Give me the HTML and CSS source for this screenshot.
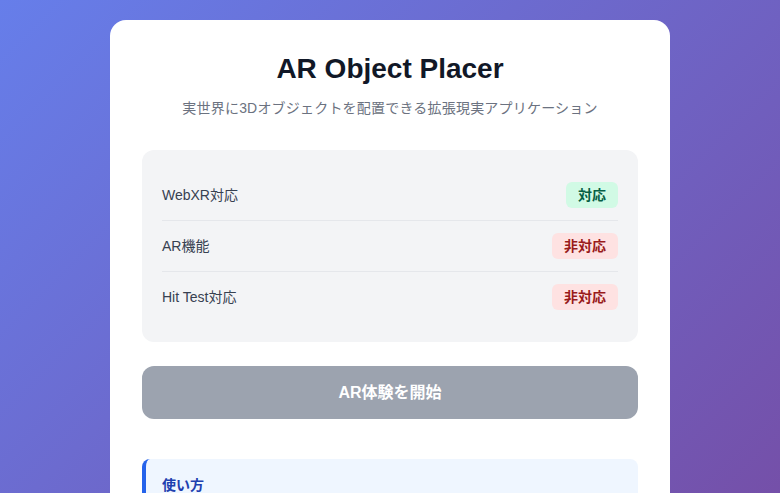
FILE: index.html
```html
<!DOCTYPE html>
<html lang="ja">
<head>
<meta charset="utf-8">
<title>AR Object Placer</title>
<link rel="stylesheet" href="styles.css">
</head>
<body>
<main class="card">
  <h1 class="title">AR Object Placer</h1>
  <p class="subtitle">実世界に3Dオブジェクトを配置できる拡張現実アプリケーション</p>
  <section class="status">
    <div class="row"><span class="label">WebXR対応</span><span class="badge ok">対応</span></div>
    <div class="row"><span class="label">AR機能</span><span class="badge ng">非対応</span></div>
    <div class="row"><span class="label">Hit Test対応</span><span class="badge ng">非対応</span></div>
  </section>
  <button class="start" disabled>AR体験を開始</button>
  <section class="info">
    <h2 class="info-title">使い方</h2>
  </section>
</main>
</body>
</html>
```
FILE: styles.css
```css
html, body {
  margin: 0;
  padding: 0;
}
body {
  min-height: 493px;
  background: linear-gradient(135deg, #667eea 0%, #764ba2 100%);
  font-family: "Liberation Sans", "Noto Sans CJK JP", sans-serif;
  display: flex;
  justify-content: center;
  padding-top: 20px;
  box-sizing: border-box;
  overflow: hidden;
}
.card {
  width: 560px;
  box-sizing: border-box;
  background: #ffffff;
  border-radius: 16px;
  padding: 32px 32px 40px;
  min-height: 600px;
}
.title {
  margin: 0;
  font-size: 28px;
  line-height: 34px;
  font-weight: 700;
  color: #111827;
  text-align: center;
}
.subtitle {
  margin: 12px 0 32px;
  font-size: 14px;
  line-height: 20px;
  letter-spacing: 0.2px;
  color: #6b7280;
  text-align: center;
}
.status {
  background: #f3f4f6;
  border-radius: 12px;
  padding: 20px;
}
.row {
  display: flex;
  justify-content: space-between;
  align-items: center;
  padding: 12px 0;
  border-bottom: 1px solid #e5e7eb;
}
.row:last-child {
  border-bottom: none;
}
.label {
  font-size: 14px;
  line-height: 20px;
  color: #374151;
}
.badge {
  font-size: 14px;
  line-height: 18px;
  font-weight: 700;
  padding: 4px 12px;
  border-radius: 6px;
}
.badge.ok {
  background: #d1fae5;
  color: #065f46;
}
.badge.ng {
  background: #fee2e2;
  color: #991b1b;
}
.start {
  display: block;
  width: 100%;
  margin-top: 24px;
  height: 53px;
  border: none;
  border-radius: 12px;
  background: #9ca3af;
  color: #ffffff;
  font-family: inherit;
  font-size: 16px;
  font-weight: 700;
  line-height: 21px;
}
.info {
  margin-top: 40px;
  background: #eff6ff;
  border-left: 4px solid #2563eb;
  border-radius: 8px;
  padding: 16px;
}
.info-title {
  margin: 0;
  font-size: 14px;
  line-height: 20px;
  font-weight: 700;
  color: #1e40af;
}
```
